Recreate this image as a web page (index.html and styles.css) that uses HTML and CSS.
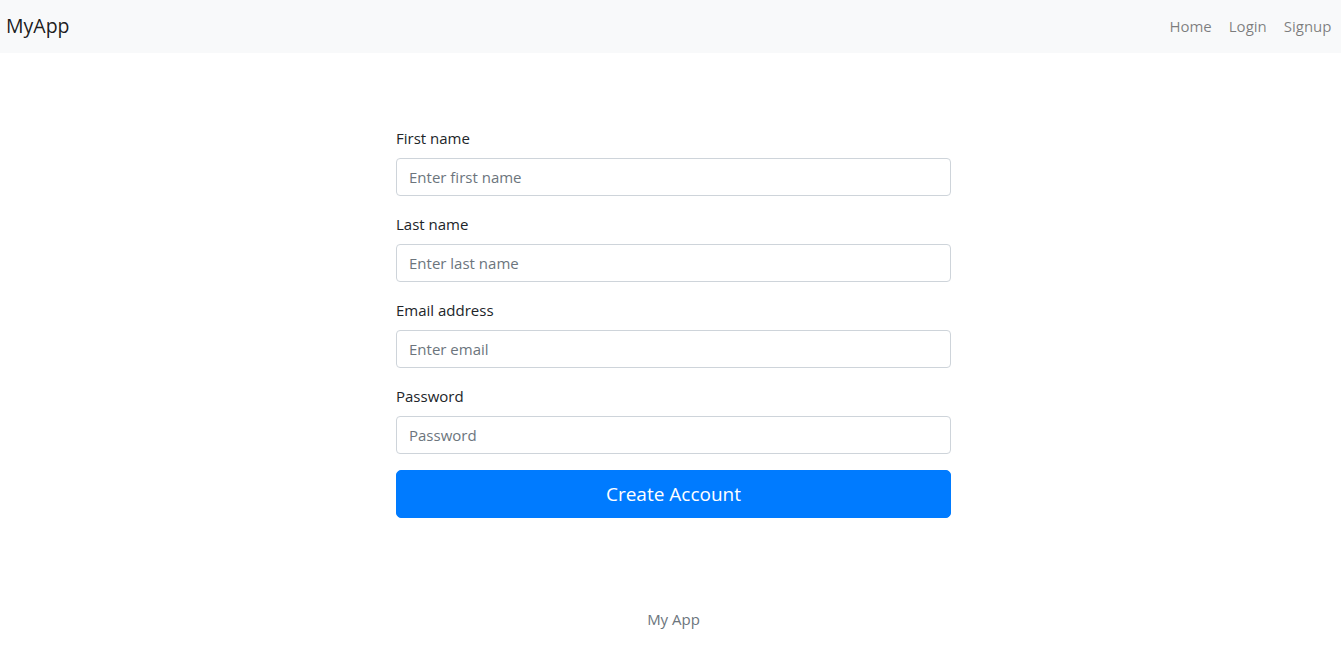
FILE: index.html
```html
<!DOCTYPE html>
<html lang="en">
<head>
<meta charset="utf-8">
<title>MyApp</title>
<link rel="stylesheet" href="styles.css">
</head>
<body>
<nav class="navbar">
  <a class="brand" href="#">MyApp</a>
  <ul class="nav-links">
    <li><a href="#">Home</a></li>
    <li><a href="#">Login</a></li>
    <li><a href="#">Signup</a></li>
  </ul>
</nav>
<main class="main">
  <form class="signup-form">
    <div class="form-group">
      <label for="first">First name</label>
      <input id="first" class="form-control" type="text" placeholder="Enter first name">
    </div>
    <div class="form-group">
      <label for="last">Last name</label>
      <input id="last" class="form-control" type="text" placeholder="Enter last name">
    </div>
    <div class="form-group">
      <label for="email">Email address</label>
      <input id="email" class="form-control" type="email" placeholder="Enter email">
    </div>
    <div class="form-group">
      <label for="pw">Password</label>
      <input id="pw" class="form-control" type="password" placeholder="Password">
    </div>
    <button type="button" class="btn-primary">Create Account</button>
  </form>
</main>
<footer class="footer">My App</footer>
</body>
</html>
```
FILE: styles.css
```css
* { box-sizing: border-box; }
html, body { margin: 0; padding: 0; }
body {
  font-family: "Open Sans", "Noto Sans", sans-serif;
  font-size: 15px;
  line-height: 24px;
  color: #212529;
  background: #fff;
}
.navbar {
  height: 53px;
  background: #f8f9fa;
  display: flex;
  align-items: center;
  justify-content: space-between;
  padding: 0 1px 2px 6px;
}
.brand {
  font-size: 19.5px;
  color: rgba(0,0,0,0.9);
  text-decoration: none;
  line-height: 30px;
}
.nav-links {
  list-style: none;
  margin: 0;
  padding: 0;
  display: flex;
}
.nav-links a {
  display: block;
  padding: 8px 8.5px;
  color: rgba(0,0,0,0.5);
  text-decoration: none;
}
.main {
  padding: 73px 0 0 6px;
}
.signup-form {
  width: 555px;
  margin: 0 auto;
}
.form-group {
  margin-bottom: 16px;
}
.form-group label {
  display: block;
  margin-bottom: 8px;
  line-height: 24px;
}
.form-control {
  display: block;
  width: 100%;
  height: 38px;
  padding: 6px 12px;
  font: inherit;
  color: #495057;
  border: 1px solid #ced4da;
  border-radius: 4px;
  background: #fff;
}
.form-control::placeholder { color: #6c757d; opacity: 1; }
.btn-primary {
  display: block;
  width: 100%;
  height: 48px;
  padding: 8px 16px;
  font: inherit;
  font-size: 19px;
  line-height: 30px;
  color: #fff;
  background: #007bff;
  border: 1px solid #007bff;
  border-radius: 5px;
  cursor: pointer;
}
.footer {
  padding: 89px 0 0 6px;
  text-align: center;
  color: #6c757d;
  line-height: 24px;
}
```
